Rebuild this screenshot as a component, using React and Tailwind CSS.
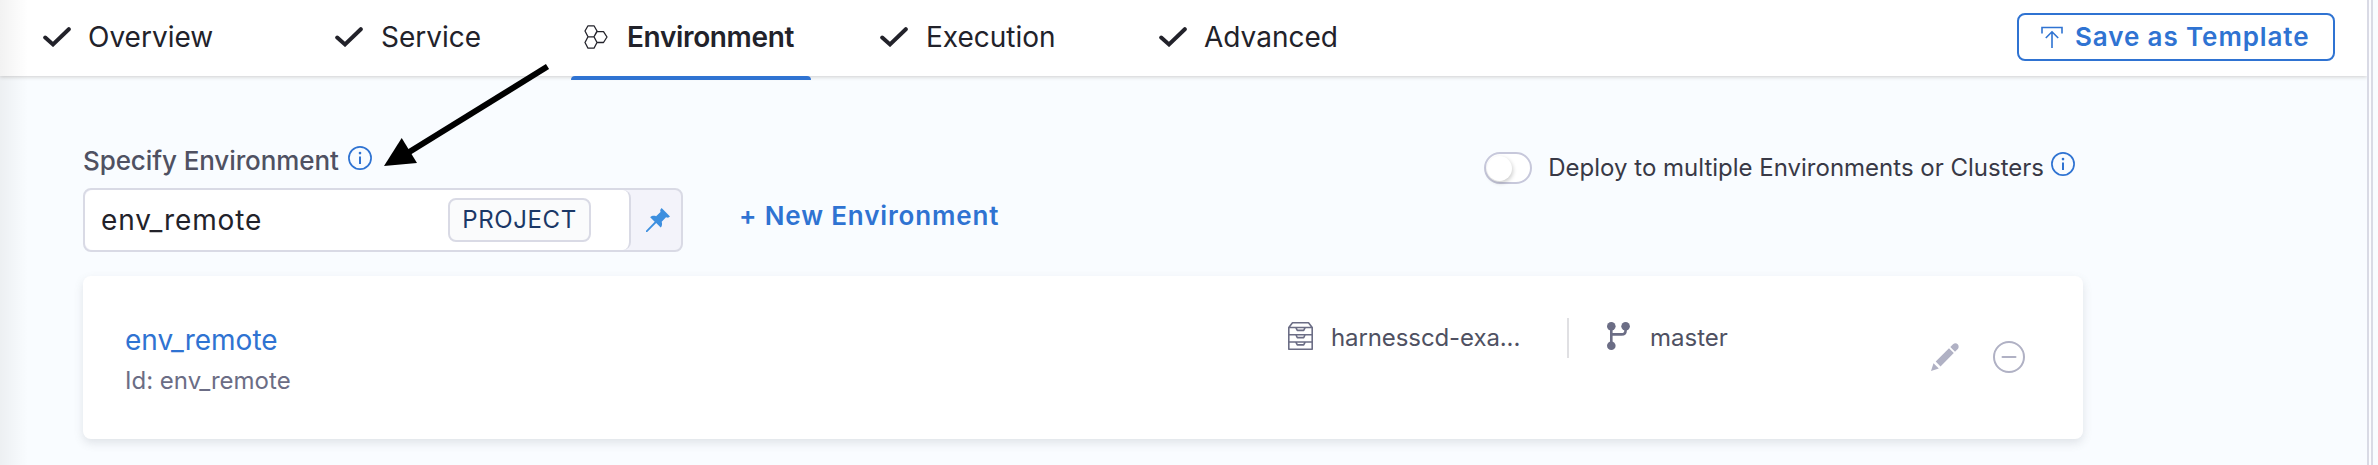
import React from "react";

const Check = () => (
  <svg className="h-5 w-7 shrink-0" viewBox="0 0 28 20" fill="none" stroke="#22222a" strokeWidth="4" strokeLinecap="round">
    <path d="M2.2 10.5 10 17.4 25.8 2.2" />
  </svg>
);

const Hexagons = () => (
  <svg className="h-6 w-6 shrink-0" viewBox="0 0 24 24" fill="none" stroke="#22222a" strokeWidth="1.3" strokeLinejoin="round">
    <path d="M4 .8h6L13 6l-3 5.8H4L1 6zM4 11.8h6l3 5.7-3 5.7H4l-3-5.7zM13 6.6h6.5l3.5 5.4-3.5 5.5H13l-3-5.7z" />
  </svg>
);

const Info = () => (
  <svg className="h-6 w-6 shrink-0" viewBox="0 0 24 24" fill="none" stroke="#2f73d2" strokeWidth="1.7">
    <circle cx="12" cy="12" r="11.1" />
    <path d="M12 10.6V18" strokeWidth="2" />
    <circle cx="12" cy="7.1" r="1.3" fill="#2f73d2" stroke="none" />
  </svg>
);

const Tab = ({ label, width, gap, active }) => (
  <div className={`flex h-full shrink-0 items-center ${width}`}>
    {active ? <Hexagons /> : <Check />}
    <span className={`leading-9 whitespace-nowrap ${gap} ${active ? "font-semibold tracking-[-0.35px]" : ""}`}>{label}</span>
  </div>
);

export default function App() {
  return (
    <div className="relative flex h-[465px] w-[2378px] overflow-hidden bg-[#f9fcff] font-['Inter',sans-serif] text-[#22222a]">
      <div className="flex w-[2367px] flex-col">
        <header className="relative z-10 flex h-[76px] items-start bg-white pl-[43px] shadow-[0_1px_4px_rgba(40,25,10,0.2)]">
          <nav className="flex h-[74px] items-center text-[28px]">
            <Tab label="Overview" width="w-[292px]" gap="ml-[17px]" />
            <Tab label="Service" width="w-[249px]" gap="ml-[18px]" />
            <Tab label="Environment" width="w-[296px]" gap="ml-[19px]" active />
            <Tab label="Execution" width="w-[279px]" gap="ml-[18px]" />
            <Tab label="Advanced" width="w-[200px]" gap="ml-[17px]" />
          </nav>
          <div className="absolute top-[76px] left-[571px] h-1 w-60 rounded-t-sm bg-[#2f73d2]" />
          <button className="mt-[13px] mr-8 ml-auto flex h-12 w-[318px] items-center rounded-lg border-2 border-[#2f73d2] pl-[22px] text-[26px] font-semibold text-[#2f73d2]">
            <svg className="h-[22px] w-[22px]" viewBox="0 0 22 22" fill="none" stroke="currentColor" strokeWidth="1.6">
              <path d="M1 7.5V1.5h20v6M11 22V6M4.8 12 11 5.8 17.2 12" />
            </svg>
            <span className="-mt-0.5 ml-3 tracking-[0.9px] whitespace-nowrap">Save as Template</span>
          </button>
        </header>

        <main className="flex flex-col pl-[83px]">
          <div className="flex h-[200px] w-[2000px] justify-between">
            <div className="flex flex-col pt-[67px]">
              <div className="flex h-[45px] items-start">
                <span className="text-[26px] leading-9 font-[550] tracking-[-0.1px] whitespace-nowrap text-[#4f5162]">Specify Environment</span>
                <span className="mt-[3px] ml-[9px]"><Info /></span>
              </div>
              <div className="flex items-center">
                <div className="flex h-16 w-[600px] rounded-lg border-2 border-[#d9dae5] bg-[#f3f3fa]">
                  <div className="flex w-[546px] items-center rounded-lg border-r-2 border-[#d9dae5] bg-white pl-4">
                    <span className="text-[28px] tracking-[0.85px]">env_remote</span>
                    <span className="mr-[38px] ml-auto flex h-11 w-[143px] items-center justify-center rounded-lg border-2 border-[#d9dae5] bg-[#fafbfc] text-[24px] tracking-[0.6px] text-[#1b3867]">PROJECT</span>
                  </div>
                  <div className="flex flex-1 items-center justify-center pl-[3px]">
                    <svg className="h-6 w-6" viewBox="0 0 24 24" fill="#3d8fdf">
                      <path d="M15.6 0 24 8.4l-2 1.3-2-.4-4.3 4.400c.7 2.3.4 4.3-1 5.9l-4.5-4.5L1.2 24H0v-1.200l8.700-9.100L4.2 9.2c1.6-1.4 3.7-1.700 5.9-1l4.4-4.300-.3-2z" />
                    </svg>
                  </div>
                </div>
                <span className="-mt-[9px] ml-[56px] text-[26px] font-semibold tracking-[0.85px] whitespace-nowrap text-[#2f73d2]">+ New Environment</span>
              </div>
            </div>
            <div className="mt-[76px] mr-2 flex h-8 items-center self-start">
              <div className="flex h-8 w-12 items-center rounded-full border-2 border-[#c7c8db] bg-white pl-px">
                <div className="h-[25px] w-[25px] rounded-full bg-white shadow-[1px_2px_4px_rgba(0,0,0,0.2)]" />
              </div>
              <span className="ml-4 text-[24px] whitespace-nowrap text-[#383946]">Deploy to multiple Environments or Clusters</span>
              <span className="ml-[7px] self-start"><Info /></span>
            </div>
          </div>

          <section className="flex h-[163px] w-[2000px] rounded-lg bg-white shadow-[0_4px_10px_rgba(96,97,112,0.16)]">
            <div className="flex w-[1205px] flex-col pt-[46px] pl-[42px]">
              <span className="text-[28px] leading-9 text-[#2f73d2]">env_remote</span>
              <span className="mt-[7px] text-[24px] leading-8 text-[#6b6d85]">Id: env_remote</span>
            </div>
            <div className="mt-[42px] flex h-10 items-center text-[24px] text-[#4f5162]">
              <svg className="-mt-1 h-7 w-[25px]" viewBox="0 0 25 28" fill="none" stroke="#6b6d85" strokeWidth="1.6" strokeLinejoin="round">
                <path d="M.8 5.5 4.5.8h16l3.7 4.7v21.7H.8zM.8 5.5h23.4M.8 12.7h23.4M.8 20h23.4M8 5.8l1.3 2.6h6.4L17 5.8M8 13l1.3 2.6h6.4L17 13M8 20.3l1.3 2.6h6.4l1.3-2.6" />
              </svg>
              <span className="ml-[18px] w-[236px] tracking-[-0.1px] whitespace-nowrap">harnesscd-exa...</span>
              <div className="h-10 w-0.5 bg-[#e0e0e3]" />
              <svg className="-mt-1 ml-[38px] h-7 w-[23px]" viewBox="0 0 23 28" fill="#6b6d85">
                <circle cx="4.3" cy="4.3" r="4.3" />
                <circle cx="18.6" cy="4.3" r="4.3" />
                <circle cx="4.3" cy="23.7" r="4.3" />
                <path d="M4.3 4v20M18.6 5v3.4q0 4-4 4H4.3" fill="none" stroke="#6b6d85" strokeWidth="2.6" />
              </svg>
              <span className="ml-5">master</span>
            </div>
            <div className="mt-[65px] mr-[58px] ml-auto flex h-8 items-center gap-[34px]">
              <svg className="h-7 w-7" viewBox="0 0 28 28" fill="#b0b1c4">
                <path d="M0 28 2.5 20.3 7.8 25.4zM4.7 18.6 18 5.3l4.8 4.8L9.5 23.4zM19.3 4 22 1.3c3.3-3 7.5 1.4 4.8 4.7L24 8.8z" />
              </svg>
              <svg className="h-8 w-8" viewBox="0 0 32 32" fill="none" stroke="#b0b1c4" strokeWidth="2">
                <circle cx="16" cy="16" r="15" />
                <path d="M9.5 16h13" strokeLinecap="round" />
              </svg>
            </div>
          </section>
        </main>
      </div>
      <div className="z-20 h-full w-1.5 border-x-2 border-[#d9dae5] bg-[#fcfcff]" />
      <div className="pointer-events-none absolute inset-y-0 left-0 z-20 w-7 bg-gradient-to-r from-black/5 to-transparent" />
      <svg className="pointer-events-none absolute top-[60px] left-[380px] z-20 h-[110px] w-[172px]" viewBox="0 0 172 110">
        <path d="M167.5 6.5 26 94" stroke="#000" strokeWidth="6" />
        <path d="M4 106 21.7 78 37 103z" />
      </svg>
    </div>
  );
}
